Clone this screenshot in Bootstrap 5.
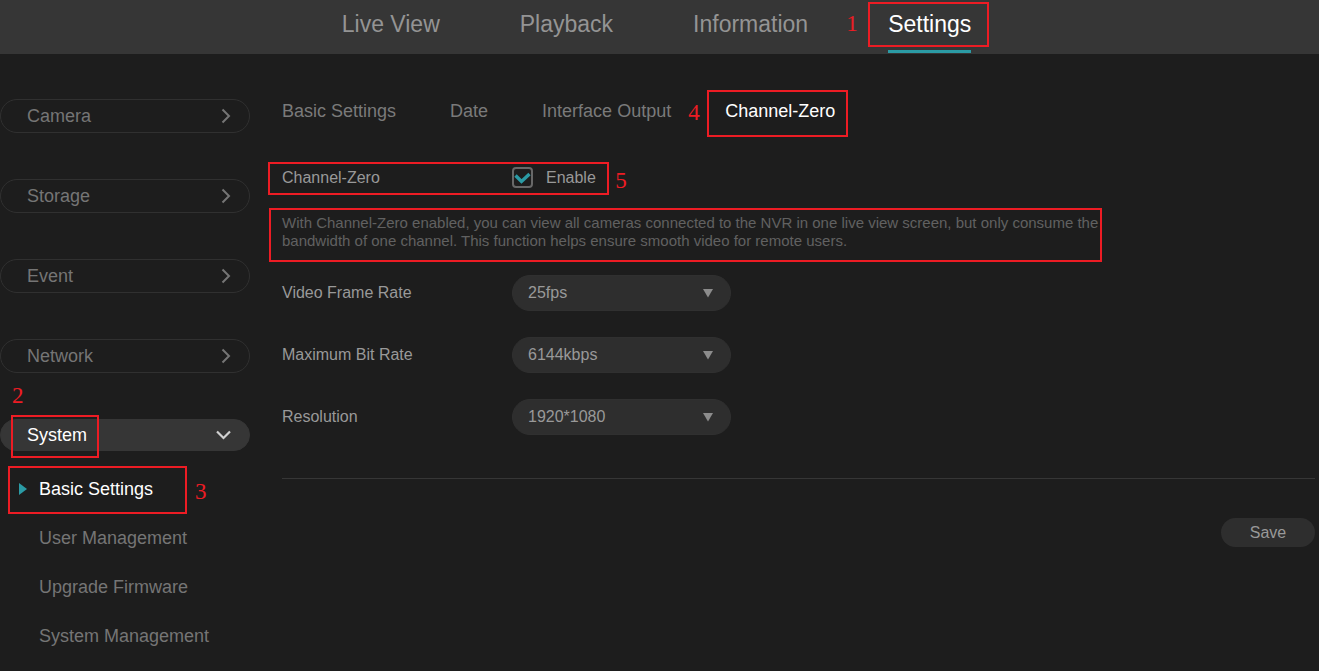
<!DOCTYPE html>
<html lang="en">
<head>
<meta charset="utf-8">
<meta name="viewport" content="width=device-width, initial-scale=1">
<title>NVR Settings</title>
<link href="https://cdn.jsdelivr.net/npm/bootstrap@5.3.0/dist/css/bootstrap.min.css" rel="stylesheet">
<style>
  body { background: #1d1d1d; color: #999; font: 16px/20px "Liberation Sans", Arial, sans-serif; }
  a { color: inherit; text-decoration: none; }
  a:hover { color: #fff; }

  .topbar { background: #363636; min-height: 54px; padding-right: 6px; }
  .topbar ul { column-gap: 80px; }
  .topbar a { display: block; height: 54px; padding-top: 10px; font-size: 23px; line-height: 28px; color: #949494; }
  .topbar a.current { color: #fff; }
  .topbar a.current::before { content: ""; position: absolute; left: 0; right: 0; bottom: 1px; height: 3px; background: #2b9ba5; }

  .sidebar { width: 250px; padding-top: 45px; }
  .side-toggle { height: 34px; width: 100%; padding: 0 18px 0 26px; border: 1px solid #303030; border-radius: 17px; background: transparent; color: #757575; font-size: 18px; margin-bottom: 46px; }
  .side-toggle.current { height: 32px; background: #363636; border-color: #363636; color: #fff; margin-bottom: 14px; }
  .submenu { font-size: 18px; line-height: 49px; color: #757575; }
  .submenu a { padding-left: 39px; }
  .submenu .current { color: #fff; }
  .submenu svg { position: absolute; left: 19px; top: 18px; }

  .content { padding: 46px 4px 0 32px; min-width: 0; }
  .tabs { font-size: 18px; line-height: 22px; column-gap: 54px; color: #7a7a7a; margin-bottom: 45px; }
  .tabs .current { color: #fff; }
  .label-col { width: 230px; }
  .form-check-input { width: 21px; height: 21px; margin: 0 13px 0 0; border: 2px solid #757575; border-radius: 5px; background-color: transparent; }
  .form-check-input:checked { border-color: #686868; background-color: transparent; background-size: 17px 17px;
    background-image: url("data:image/svg+xml,%3Csvg xmlns='http://www.w3.org/2000/svg' viewBox='0 0 17 17'%3E%3Cpath d='M1.500 6.500l6 6L15.500 5' fill='none' stroke='%232b9ba5' stroke-width='3.4'/%3E%3C/svg%3E"); }
  .hint { font-size: 15px; line-height: 18px; color: #616161; max-width: 820px; margin: 26px 0 25px; }
  .field { margin-bottom: 26px; }
  .form-select { width: 219px; height: 36px; padding: 0 36px 0 15px; border: 1px solid #303030; border-radius: 18px; background-color: #2e2e2e; color: #999; font-size: 16px; line-height: 20px;
    background-position: right 16px center; background-size: 12px 10px;
    background-image: url("data:image/svg+xml,%3Csvg xmlns='http://www.w3.org/2000/svg' viewBox='0 0 12 10'%3E%3Cpath d='M1 1h10L6 9.500z' fill='%238c8c8c'/%3E%3C/svg%3E"); }
  .rule { border-top: 1px solid #363636; margin: 43px 0 39px; }
  .btn-save { width: 94px; height: 29px; padding: 0; border: 0; border-radius: 15px; background: #2e2e2e; color: #999; font-size: 16px; line-height: 27px; }

  /* numbered walkthrough callouts drawn over the page */
  .callout { position: absolute; border: 2px solid #ed1c24; pointer-events: none; }
  .step { position: absolute; font: 23px/24px "Liberation Serif", "Times New Roman", serif; color: #ed1c24; pointer-events: none; }
  .c-settings { inset: 2px -18px 7px -20px; }
  .s-settings { left: -42px; top: 12px; }
  .c-system { left: 11px; top: -4px; width: 88px; height: 43px; }
  .s-system { left: 12px; top: -35px; }
  .c-basic { left: 8px; top: 1px; width: 179px; height: 48px; }
  .s-basic { left: 195px; top: 15px; }
  .c-tab { inset: -10px -13px -15px -18px; }
  .s-tab { left: -37px; top: 1px; }
  .c-enable { inset: -5px -13px -7px -14px; }
  .s-enable { right: -31px; top: 2px; }
  .c-hint { inset: -6px 0 -12px -13px; }
</style>
</head>
<body>
<header class="topbar">
  <nav aria-label="Main">
    <ul class="list-unstyled d-flex flex-wrap justify-content-center m-0">
      <li><a href="#">Live View</a></li>
      <li><a href="#">Playback</a></li>
      <li><a href="#">Information</a></li>
      <li class="position-relative"><a href="#" class="current" aria-current="page">Settings</a>
        <span class="callout c-settings"></span><span class="step s-settings">1</span></li>
    </ul>
  </nav>
</header>

<div class="d-flex">
  <aside class="sidebar flex-shrink-0">
    <button type="button" class="side-toggle d-flex align-items-center justify-content-between">Camera
      <svg width="10" height="16" viewBox="0 0 10 16" fill="none" stroke="currentColor" stroke-width="2"><path d="M1.500 1.500L8 8l-6.500 6.500"/></svg></button>
    <button type="button" class="side-toggle d-flex align-items-center justify-content-between">Storage
      <svg width="10" height="16" viewBox="0 0 10 16" fill="none" stroke="currentColor" stroke-width="2"><path d="M1.500 1.500L8 8l-6.500 6.500"/></svg></button>
    <button type="button" class="side-toggle d-flex align-items-center justify-content-between">Event
      <svg width="10" height="16" viewBox="0 0 10 16" fill="none" stroke="currentColor" stroke-width="2"><path d="M1.500 1.500L8 8l-6.500 6.500"/></svg></button>
    <button type="button" class="side-toggle d-flex align-items-center justify-content-between">Network
      <svg width="10" height="16" viewBox="0 0 10 16" fill="none" stroke="currentColor" stroke-width="2"><path d="M1.500 1.500L8 8l-6.500 6.500"/></svg></button>
    <div class="position-relative">
      <button type="button" class="side-toggle current d-flex align-items-center justify-content-between" aria-expanded="true">System
        <svg width="15" height="10" viewBox="0 0 15 10" fill="none" stroke="#d0d0d0" stroke-width="2.200"><path d="M1 1.500l6.500 6.500L14 1.500"/></svg></button>
      <span class="callout c-system"></span><span class="step s-system">2</span>
    </div>
    <ul class="submenu list-unstyled m-0">
      <li class="position-relative"><a href="#" class="current d-block">Basic Settings</a>
        <svg width="8" height="12" viewBox="0 0 8 12" fill="#2b9ba5"><path d="M0 0l8 6-8 6z"/></svg>
        <span class="callout c-basic"></span><span class="step s-basic">3</span></li>
      <li><a href="#" class="d-block">User Management</a></li>
      <li><a href="#" class="d-block">Upgrade Firmware</a></li>
      <li><a href="#" class="d-block">System Management</a></li>
    </ul>
  </aside>

  <main class="content flex-grow-1">
    <nav aria-label="Basic settings">
      <ul class="tabs list-unstyled d-flex flex-wrap">
        <li><a href="#">Basic Settings</a></li>
        <li><a href="#">Date</a></li>
        <li><a href="#">Interface Output</a></li>
        <li class="position-relative"><a href="#" class="current" aria-current="page">Channel-Zero</a>
          <span class="callout c-tab"></span><span class="step s-tab">4</span></li>
      </ul>
    </nav>
    <form>
      <div class="d-inline-flex align-items-center position-relative">
        <span class="label-col" id="cz">Channel-Zero</span>
        <input class="form-check-input" type="checkbox" id="enable" checked aria-describedby="cz">
        <label for="enable">Enable</label>
        <span class="callout c-enable"></span><span class="step s-enable">5</span>
      </div>
      <p class="hint position-relative">With Channel-Zero enabled, you can view all cameras connected to the NVR in one live view screen, but only consume the bandwidth of one channel. This function helps ensure smooth video for remote users.
        <span class="callout c-hint"></span></p>
      <div class="field d-flex align-items-center">
        <label class="label-col" for="fps">Video Frame Rate</label>
        <select class="form-select" id="fps"><option>25fps</option></select>
      </div>
      <div class="field d-flex align-items-center">
        <label class="label-col" for="rate">Maximum Bit Rate</label>
        <select class="form-select" id="rate"><option>6144kbps</option></select>
      </div>
      <div class="field d-flex align-items-center">
        <label class="label-col" for="res">Resolution</label>
        <select class="form-select" id="res"><option>1920*1080</option></select>
      </div>
      <div class="rule"></div>
      <div class="d-flex justify-content-end"><button type="button" class="btn-save">Save</button></div>
    </form>
  </main>
</div>
<script src="https://cdn.jsdelivr.net/npm/bootstrap@5.3.0/dist/js/bootstrap.bundle.min.js"></script>
</body>
</html>
